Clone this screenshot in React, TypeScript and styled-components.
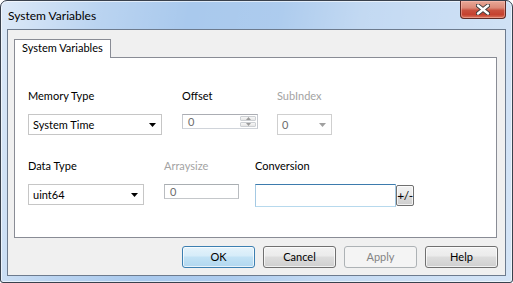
import React from "react";
import styled, { createGlobalStyle } from "styled-components";

const Global = createGlobalStyle`
  html, body { margin: 0; padding: 0; background: #ffffff; }
  body { font-family: Lato, "Liberation Sans", sans-serif; }
  * { box-sizing: border-box; }
`;

const Window = styled.div`
  width: 513px;
  height: 283px;
  border: 1px solid #39414d;
  border-radius: 7px 7px 3px 3px;
  overflow: hidden;
  display: flex;
  flex-direction: column;
  background:
    linear-gradient(100deg, rgba(255,255,255,0.6) 0%, rgba(255,255,255,0.2) 18%, rgba(255,255,255,0) 34%, rgba(255,255,255,0.05) 50%, rgba(255,255,255,0.3) 65%, rgba(255,255,255,0.5) 100%),
    #a9c9ed;
  box-shadow: inset 0 0 0 1px rgba(255, 255, 255, 0.6);
`;

const TitleBar = styled.div`
  height: 28px;
  flex: none;
  display: flex;
  justify-content: space-between;
  align-items: flex-start;
  padding: 0 6px 0 7px;
`;

const Title = styled.div`
  font-size: 12px;
  line-height: 15px;
  padding-top: 7px;
  color: #000000;
`;

const CloseButton = styled.div`
  width: 46px;
  height: 18px;
  border: 1px solid #5e2a25;
  border-top: none;
  border-radius: 0 0 4px 4px;
  display: flex;
  align-items: center;
  justify-content: center;
  background: linear-gradient(#e8a897 0%, #dc8a78 40%, #c9503e 55%, #c5412f 80%, #d9765e 100%);
  box-shadow: inset 0 0 0 1px rgba(255, 200, 190, 0.45);
`;

const Client = styled.div`
  flex: 1;
  margin: 0 6px 6px 6px;
  border: 1px solid #6d7b8e;
  background: #f0f0f0;
  display: flex;
  flex-direction: column;
  padding: 9px 7px 7px 6px;
`;

const TabStrip = styled.div`
  display: flex;
  height: 18px;
`;

const Tab = styled.div`
  position: relative;
  z-index: 1;
  width: 97px;
  height: 19px;
  border: 1px solid #898c95;
  border-bottom: none;
  background: #ffffff;
  font-size: 11px;
  line-height: 15px;
  padding-left: 7px;
  color: #000000;
`;

const Panel = styled.div`
  height: 181px;
  margin-right: 1px;
  border: 1px solid #898c95;
  background: #ffffff;
  padding: 30px 0 0 13px;
  display: flex;
  flex-direction: column;
  gap: 23px;
`;

const Row = styled.div`
  display: flex;
  align-items: flex-start;
`;

const Field = styled.div<{ $w: number; $mr?: number }>`
  display: flex;
  flex-direction: column;
  width: ${(p) => p.$w}px;
  margin-right: ${(p) => p.$mr ?? 0}px;
`;

const Label = styled.div<{ $disabled?: boolean }>`
  font-size: 11px;
  line-height: 15px;
  margin-bottom: 11px;
  white-space: nowrap;
  color: ${(p) => (p.$disabled ? "#a3a3a3" : "#000000")};
`;

const Combo = styled.div<{ $disabled?: boolean }>`
  height: 21px;
  border: 1px solid ${(p) => (p.$disabled ? "#cfcfcf" : "#c6c6c6")};
  background: #ffffff;
  display: flex;
  align-items: center;
  justify-content: space-between;
  padding: 0 5px 0 4px;
  font-size: 11px;
  color: ${(p) => (p.$disabled ? "#6d6d6d" : "#000000")};
`;

const Edit = styled.div<{ $h?: number; $focus?: boolean; $disabled?: boolean }>`
  height: ${(p) => p.$h ?? 22}px;
  flex: 1;
  background: #ffffff;
  display: flex;
  align-items: stretch;
  border: 1px solid;
  border-color: ${(p) =>
    p.$focus
      ? "#3d7bad #a4c9e3 #b7d9ed #a4c9e3"
      : p.$disabled
      ? "#a9aeb2 #b9bcc0 #c4c7ca #b9bcc0"
      : "#abadb3 #c6c9cf #d0d4da #c6c9cf"};
  font-size: 11px;
  color: #6d6d6d;
`;

const EditText = styled.div`
  flex: 1;
  display: flex;
  align-items: center;
  padding-left: 5px;
`;

const Spin = styled.div`
  width: 16px;
  display: flex;
  flex-direction: column;
  gap: 1px;
  margin: 1px 1px 1px 0;
`;

const SpinHalf = styled.div`
  flex: 1;
  border: 1px solid #cdd0d4;
  border-radius: 1px;
  background: linear-gradient(#f7f7f7, #e6e6e6);
  display: flex;
  align-items: center;
  justify-content: center;
`;

const Group = styled.div`
  display: flex;
  align-items: flex-start;
`;

const SmallButton = styled.div`
  width: 18px;
  height: 21px;
  margin-top: 1px;
  border: 1px solid #707070;
  border-radius: 2px;
  background: linear-gradient(#f2f2f2 0%, #ebebeb 45%, #dddddd 50%, #cfcfcf 100%);
  box-shadow: inset 0 0 0 1px rgba(255, 255, 255, 0.7);
  font-size: 12px;
  line-height: 19px;
  text-align: center;
  color: #000000;
  letter-spacing: -0.5px;
`;

const ButtonRow = styled.div`
  display: flex;
  justify-content: flex-end;
  gap: 8px;
  margin-top: 8px;
`;

const Button = styled.div<{ $variant?: "default" | "disabled" }>`
  width: 73px;
  height: 22px;
  border-radius: 3px;
  border: 1px solid
    ${(p) => (p.$variant === "default" ? "#3c7fb1" : p.$variant === "disabled" ? "#adb2b5" : "#707070")};
  background: ${(p) =>
    p.$variant === "default"
      ? "linear-gradient(#e5f3fb 0%, #d6ecf9 45%, #c2e2f5 50%, #b1d7ef 100%)"
      : p.$variant === "disabled"
      ? "#f4f4f4"
      : "linear-gradient(#f2f2f2 0%, #ebebeb 45%, #dddddd 50%, #cfcfcf 100%)"};
  box-shadow: ${(p) =>
    p.$variant === "disabled" ? "none" : "inset 0 0 0 1px rgba(255, 255, 255, 0.7)"};
  color: ${(p) => (p.$variant === "disabled" ? "#838383" : "#000000")};
  font-size: 11px;
  line-height: 20px;
  text-align: center;
`;

const Arrow = ({ color = "#000" }: { color?: string }) => (
  <svg width="7" height="4" viewBox="0 0 7 4">
    <path d="M0 0H7L3.5 4Z" fill={color} />
  </svg>
);

const SpinArrow = ({ up }: { up?: boolean }) => (
  <svg width="5" height="3" viewBox="0 0 5 3">
    <path d={up ? "M0 3H5L2.5 0Z" : "M0 0H5L2.5 3Z"} fill="#9a9a9a" />
  </svg>
);

const CloseGlyph = () => (
  <svg width="14" height="11" viewBox="0 0 14 11">
    <path d="M2 1.5L12 9.5M12 1.5L2 9.5" stroke="#3b3b3b" strokeWidth="4.2" strokeLinecap="round" />
    <path d="M2 1.5L12 9.5M12 1.5L2 9.5" stroke="#ffffff" strokeWidth="2.4" strokeLinecap="round" />
  </svg>
);

export default function App() {
  return (
    <>
      <Global />
      <Window>
        <TitleBar>
          <Title>System Variables</Title>
          <CloseButton>
            <CloseGlyph />
          </CloseButton>
        </TitleBar>
        <Client>
          <TabStrip>
            <Tab>System Variables</Tab>
          </TabStrip>
          <Panel>
            <Row>
              <Field $w={134} $mr={20}>
                <Label>Memory Type</Label>
                <Combo>
                  <span>System Time</span>
                  <Arrow />
                </Combo>
              </Field>
              <Field $w={76} $mr={19}>
                <Label>Offset</Label>
                <Edit $h={21}>
                  <EditText>0</EditText>
                  <Spin>
                    <SpinHalf>
                      <SpinArrow up />
                    </SpinHalf>
                    <SpinHalf>
                      <SpinArrow />
                    </SpinHalf>
                  </Spin>
                </Edit>
              </Field>
              <Field $w={55}>
                <Label $disabled>SubIndex</Label>
                <Combo $disabled>
                  <span>0</span>
                  <Arrow color="#a0a0a0" />
                </Combo>
              </Field>
            </Row>
            <Row>
              <Field $w={116} $mr={20}>
                <Label>Data Type</Label>
                <Combo>
                  <span>uint64</span>
                  <Arrow />
                </Combo>
              </Field>
              <Field $w={75} $mr={16}>
                <Label $disabled>Arraysize</Label>
                <Edit $disabled>
                  <EditText>0</EditText>
                </Edit>
              </Field>
              <Field $w={159}>
                <Label>Conversion</Label>
                <Group>
                  <Edit $focus $h={23}>
                    <EditText />
                  </Edit>
                  <SmallButton>+/-</SmallButton>
                </Group>
              </Field>
            </Row>
          </Panel>
          <ButtonRow>
            <Button $variant="default">OK</Button>
            <Button>Cancel</Button>
            <Button $variant="disabled">Apply</Button>
            <Button>Help</Button>
          </ButtonRow>
        </Client>
      </Window>
    </>
  );
}
